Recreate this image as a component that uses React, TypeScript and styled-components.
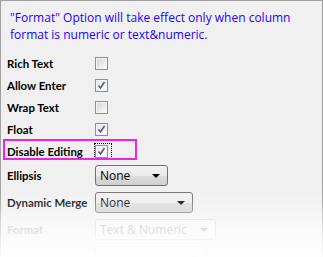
import React from 'react';
import styled, { createGlobalStyle } from 'styled-components';

const GlobalStyle = createGlobalStyle`
  html, body { margin: 0; padding: 0; background: #fff; }
  body { font-family: "Open Sans", "Liberation Sans", sans-serif; }
`;

type CheckRow = { label: string; checked: boolean; focused?: boolean };
type ComboRow = { label: string; value: string; width: number; disabled?: boolean };

const checkRows: CheckRow[] = [
  { label: 'Rich Text', checked: false },
  { label: 'Allow Enter', checked: true },
  { label: 'Wrap Text', checked: false },
  { label: 'Float', checked: true },
  { label: 'Disable Editing', checked: true, focused: true },
];

const comboRows: ComboRow[] = [
  { label: 'Ellipsis', value: 'None', width: 73 },
  { label: 'Dynamic Merge', value: 'None', width: 98 },
  { label: 'Format', value: 'Text & Numeric', width: 121, disabled: true },
  { label: '', value: '', width: 111, disabled: true },
];

const Panel = styled.div`
  position: relative;
  width: 323px;
  height: 257px;
  background: #f0f0f0;
  box-shadow: inset 1px 1px 0 #a0a0a0, inset -1px 0 0 #a0a0a0;
  overflow: hidden;
  font-size: 12px;
`;

const Note = styled.div`
  padding: 9px 20px 0 10px;
  height: 44px;
  box-sizing: border-box;
  color: #2400ff;
  line-height: 17px;
`;

const Form = styled.div`
  display: flex;
  flex-direction: column;
  padding: 8px 0 0 7px;
`;

const Row = styled.div<{ $h: number }>`
  position: relative;
  display: flex;
  align-items: center;
  height: ${({ $h }) => $h}px;
`;

const Label = styled.div<{ $disabled?: boolean }>`
  width: 88px;
  font-family: Lato, "Open Sans", sans-serif;
  font-size: 11.4px;
  font-weight: 700;
  color: ${({ $disabled }) => ($disabled ? '#a8a8a8' : '#000')};
  white-space: nowrap;
`;

const Highlight = styled.div`
  position: absolute;
  left: -4px;
  top: -1px;
  width: 134px;
  height: 21px;
  box-sizing: border-box;
  border: 2px solid #f020f0;
  pointer-events: none;
`;

const BoxWrap = styled.div<{ $focused?: boolean }>`
  display: flex;
  align-items: center;
  justify-content: flex-start;
  width: 18px;
  height: 16px;
  margin-left: -1px;
  box-sizing: border-box;
  border: 1px dotted ${({ $focused }) => ($focused ? '#000' : 'transparent')};
`;

const Box = styled.div<{ $checked: boolean }>`
  width: 13px;
  height: 13px;
  box-sizing: border-box;
  border: 1px solid #8e8f8f;
  background: ${({ $checked }) =>
    $checked
      ? 'linear-gradient(135deg, #e6e6e6 0%, #f4f4f4 60%, #fff 100%)'
      : 'linear-gradient(135deg, #d4d4d4 0%, #ececec 60%, #fbfbfb 100%)'};
  display: flex;
  align-items: center;
  justify-content: center;
  box-shadow: inset 0 0 0 1px #f4f4f4;
`;

const Combo = styled.div<{ $disabled?: boolean }>`
  display: flex;
  align-items: center;
  justify-content: space-between;
  height: 21px;
  box-sizing: border-box;
  padding: 0 7px 0 4px;
  border: 1px solid ${({ $disabled }) => ($disabled ? '#d0d0d0' : '#707070')};
  border-radius: 3px;
  background: ${({ $disabled }) =>
    $disabled ? '#f4f4f4' : 'linear-gradient(#f2f2f2 0%, #ebebeb 50%, #dddddd 51%, #cfcfcf 100%)'};
  color: ${({ $disabled }) => ($disabled ? '#a0a0a0' : '#000')};
`;

const Arrow = styled.div<{ $disabled?: boolean }>`
  width: 0;
  height: 0;
  border-left: 4px solid transparent;
  border-right: 4px solid transparent;
  border-top: 4px solid ${({ $disabled }) => ($disabled ? '#a8a8a8' : '#000')};
`;

const Fade = styled.div`
  position: absolute;
  left: 0;
  right: 0;
  bottom: 0;
  height: 70px;
  background: linear-gradient(
    rgba(255, 255, 255, 0) 0%,
    rgba(255, 255, 255, 0.2) 25%,
    rgba(255, 255, 255, 0.6) 55%,
    rgba(255, 255, 255, 0.97) 100%
  );
  pointer-events: none;
`;

const Check = () => (
  <svg width="9" height="9" viewBox="0 0 9 9">
    <path d="M1.5 4.5 L3.5 7 L7.5 1" fill="none" stroke="#4a5a99" strokeWidth="1.6" />
  </svg>
);

export default function App() {
  return (
    <>
      <GlobalStyle />
      <Panel>
        <Note>
          "Format" Option will take effect only when column format is numeric or text&amp;numeric.
        </Note>
        <Form>
          {checkRows.map((r) => (
            <Row key={r.label} $h={22}>
              {r.focused && <Highlight />}
              <Label>{r.label}</Label>
              <BoxWrap $focused={r.focused}>
                <Box $checked={r.checked}>{r.checked && <Check />}</Box>
              </BoxWrap>
            </Row>
          ))}
          {comboRows.map((r, i) => (
            <Row key={i} $h={27}>
              <Label $disabled={r.disabled}>{r.label}</Label>
              <Combo $disabled={r.disabled} style={{ width: r.width }}>
                <span>{r.value}</span>
                <Arrow $disabled={r.disabled} />
              </Combo>
            </Row>
          ))}
        </Form>
        <Fade />
      </Panel>
    </>
  );
}
